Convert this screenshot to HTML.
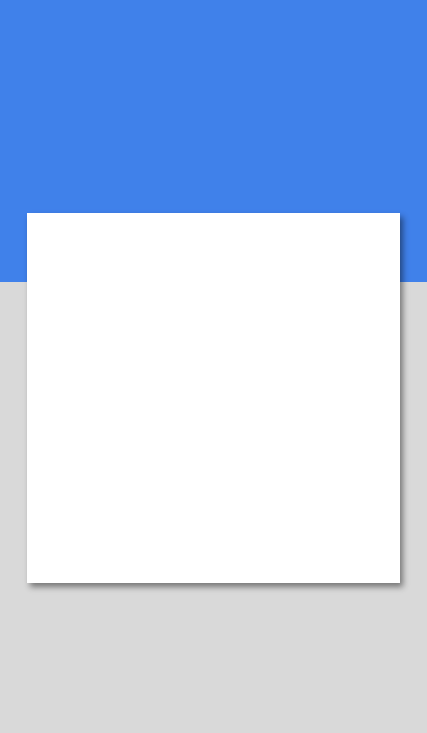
<!DOCTYPE html>
<html><head><meta charset="utf-8"><style>
html,body{margin:0;padding:0;width:427px;height:733px;overflow:hidden;background:#d9d9d9;}
.top{position:absolute;left:0;top:0;width:427px;height:282px;background:#4081ea;}
.card{position:absolute;left:27px;top:213px;width:373px;height:370px;background:#fff;box-shadow:3px 4px 6px rgba(0,0,0,0.45);}
</style></head><body>
<div class="top"></div>
<div class="card"></div>
</body></html>
